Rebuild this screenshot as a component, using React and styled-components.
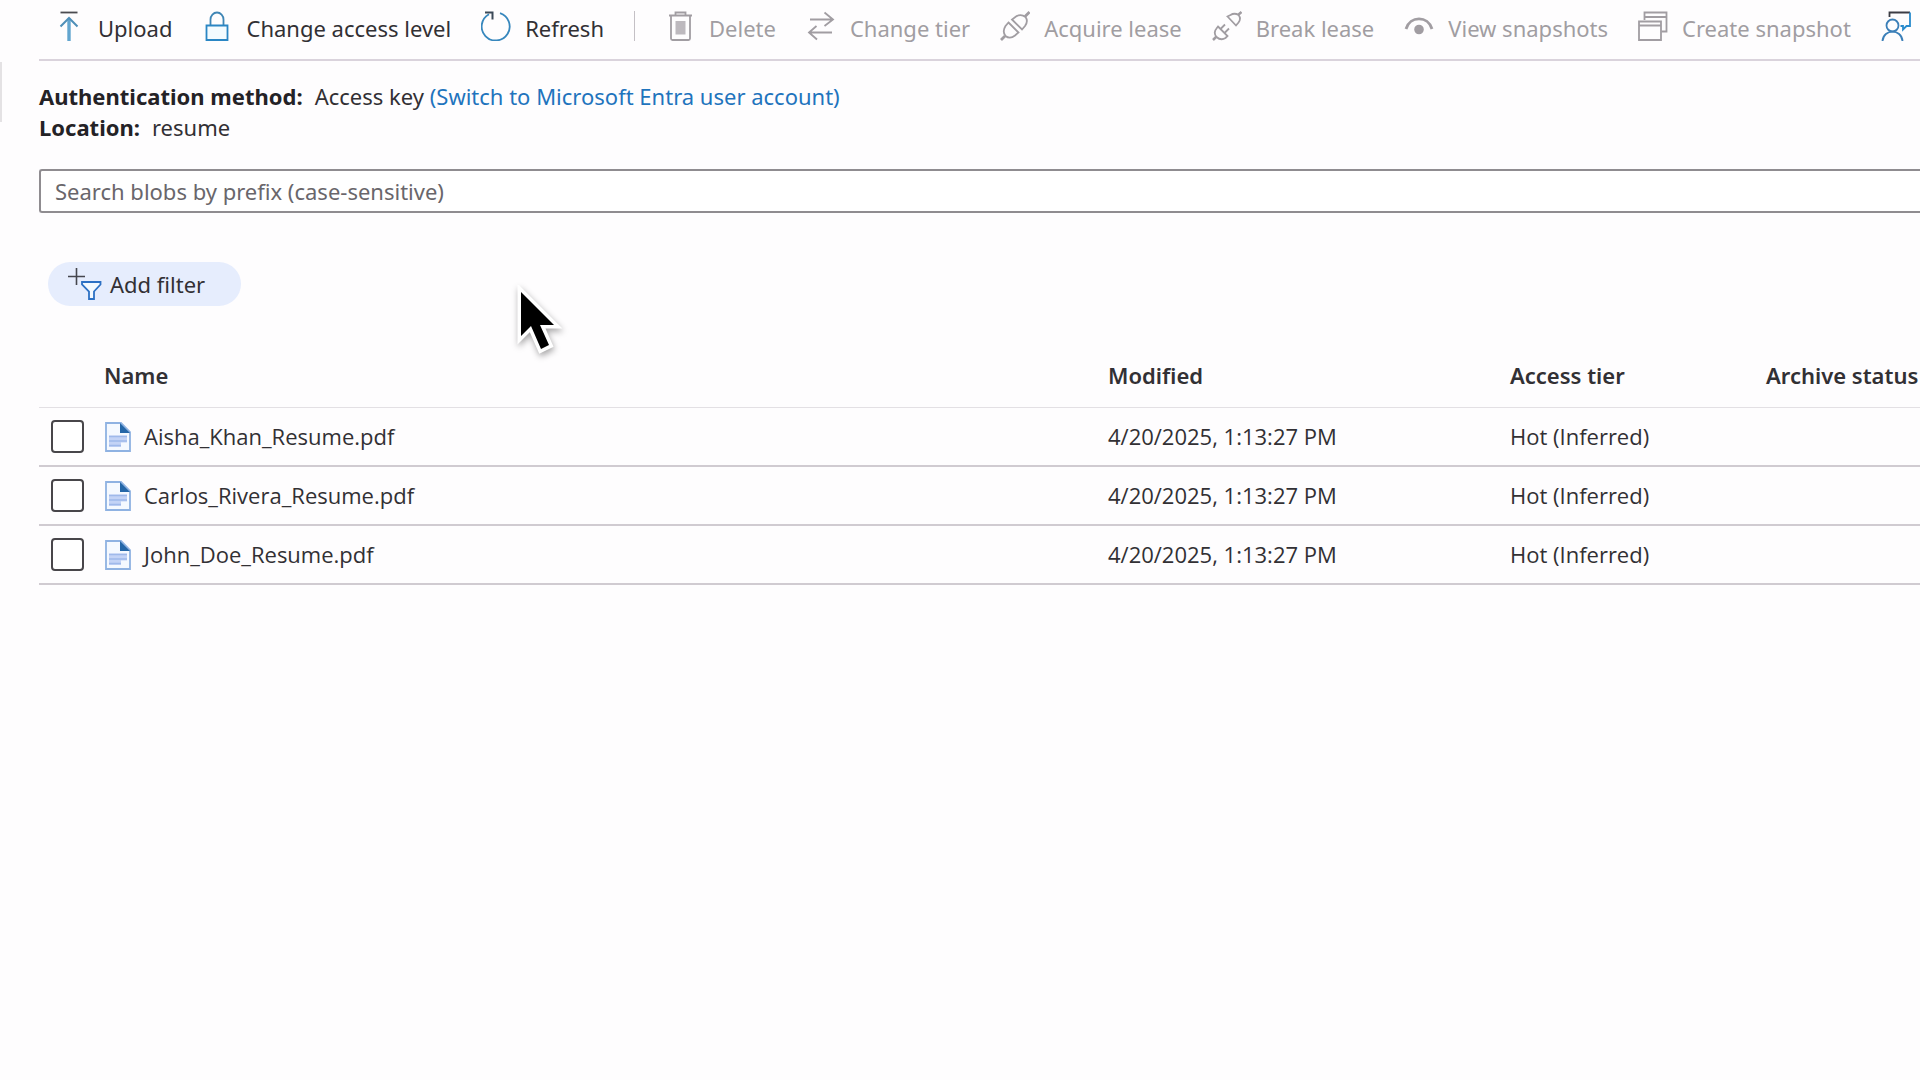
import React, { useState } from "react";
import styled, { createGlobalStyle } from "styled-components";

const GlobalStyle = createGlobalStyle`
  * {
    box-sizing: border-box;
  }
  body {
    margin: 0;
    overflow-x: hidden;
    background-color: #fefdfe;
    color: #323034;
    font-family: "Noto Sans", "Open Sans", sans-serif;
    font-size: 22px;
    line-height: 31px;
  }
  button, input {
    font: inherit;
    color: inherit;
  }
`;

const UploadIcon = () => (
  <Icon viewBox="0 0 30 30">
    <path d="M6.5 1.5h17" stroke="#4b4b50" />
    <path d="M15 7.5V30" stroke="#62a5cf" strokeWidth="3.4" />
    <path d="M6.5 15.5L15 7l8.5 8.5" stroke="#4f8fb8" strokeWidth="2" />
  </Icon>
);

const LockIcon = () => (
  <Icon viewBox="0 0 30 30">
    <path d="M8.5 14V8.5a6.5 7 0 0 1 13 0V14" stroke="#3f86b5" />
    <path d="M4.5 14.5h21v14.5h-21z" stroke="#2a86c4" fill="#f3fbff" />
  </Icon>
);

const RefreshIcon = () => (
  <Icon viewBox="0 0 30 30">
    <path d="M19 2.2A14 14 0 1 1 8 3.2" stroke="#3787bd" />
    <path d="M4 1.5h7.5V8.5" stroke="#3c4a58" strokeWidth="2" />
  </Icon>
);

const DeleteIcon = () => (
  <Icon viewBox="0 0 30 30">
    <path d="M4 4.5h23M10.5 4V1.5h10V4" />
    <path d="M6 5v22.5q0 1.5 1.5 1.5h16q1.5 0 1.5-1.5V5" />
    <path d="M10.5 10h10v13.5h-10z" fill="#bdb9be" stroke="none" />
  </Icon>
);

const TierIcon = () => (
  <Icon viewBox="0 0 30 30">
    <path d="M4 8.5h23M18.5 1.5l8.5 7-8.5 6.5" />
    <path d="M26 21.5H3M10.5 15L3 21.5l8 7" />
  </Icon>
);

const AcquireIcon = () => (
  <Icon viewBox="0 0 30 30">
    <path d="M1 29l4-4M25 5.5L29.5 1" strokeWidth="2.8" />
    <path d="M8.5 11.5L18.5 21.5 15 24.5q-5 4-9.5.5-3.500-4.500 0-10z" />
    <path d="M12 8.5L22 18.5l3-3.5q3.500-5 .5-9-4.500-3.500-9.500-.5z" />
  </Icon>
);

const BreakIcon = () => (
  <Icon viewBox="0 0 30 30">
    <path d="M1 29l3.5-3.5M26 4L29.5 1" strokeWidth="2.5" />
    <path d="M6 15.5l9.5 9.5-2 2q-4.5 3-9-1-3.500-4.500 0-8.500z" />
    <path d="M8.5 18l4.5-4.5M12.5 22l4.5-4.5" />
    <path d="M15.5 5.5l8.5 9 2.5-3q3-4 0-7.500-4-2.500-8 0z" />
  </Icon>
);

const EyeIcon = () => (
  <Icon viewBox="0 0 30 30">
    <path d="M2 18C6 4.5 24 4.5 28 18" strokeWidth="2.8" />
    <circle cx="15" cy="18.5" r="4.8" fill="currentColor" stroke="none" />
  </Icon>
);

const SnapshotIcon = () => (
  <Icon viewBox="0 0 30 30">
    <path d="M6.5 9V1.5h22v19h-5M6.5 6h22" />
    <path d="M1 10.5h22V29H1zM1 14.5h22" />
  </Icon>
);

const FeedbackIcon = () => (
  <Icon viewBox="0 0 30 30">
    <path d="M8.5 6V1.5h20.5" stroke="#3c3c44" />
    <path d="M29 1.5v13.500h-3.500L22 18.500V15h-2.500" stroke="#2a8bcd" />
    <circle cx="11.5" cy="14.5" r="6" stroke="#3b7fb8" />
    <path d="M1.500 30c1-12.500 19-12.500 20 0" stroke="#3b7fb8" />
  </Icon>
);

const FilterIcon = () => (
  <Icon viewBox="0 0 34 34" $width={34} $height={34}>
    <path d="M8.5 1v17M0 9.5h17" stroke="#45464e" strokeWidth="1.6" />
    <path
      d="M14 15h18.5v2.5L26 24.5V32h-5v-7.5L14 17.5z"
      stroke="#2d71c4"
      fill="#f4faff"
    />
  </Icon>
);

const FileIcon = () => (
  <Icon viewBox="-1 0 28 30" $width={28}>
    <path
      d="M1 1h15l9 9v19H1z"
      stroke="#8fb2e2"
      strokeWidth="1.8"
      fill="#f5f9ff"
    />
    <path d="M15 1l10 10H15z" fill="#2567a8" stroke="none" />
    <path d="M4 13.5h18v7H4zM4 20h12v5H4z" fill="#c3d3f6" stroke="none" />
    <path d="M4 14.5h18M4 19h18M4 23.5h12" stroke="#9fb9ea" strokeWidth="1.6" />
  </Icon>
);

const actions = [
  { label: "Upload", icon: UploadIcon },
  { label: "Change access level", icon: LockIcon },
  { label: "Refresh", icon: RefreshIcon },
];

const blobActions = [
  { label: "Delete", icon: DeleteIcon },
  { label: "Change tier", icon: TierIcon },
  { label: "Acquire lease", icon: AcquireIcon },
  { label: "Break lease", icon: BreakIcon },
  { label: "View snapshots", icon: EyeIcon },
  { label: "Create snapshot", icon: SnapshotIcon },
];

const blobs = [
  "Aisha_Khan_Resume.pdf",
  "Carlos_Rivera_Resume.pdf",
  "John_Doe_Resume.pdf",
].map((name) => ({
  name,
  modified: "4/20/2025, 1:13:27 PM",
  tier: "Hot (Inferred)",
}));

const App = () => {
  const [prefix, setPrefix] = useState("");

  const rows = blobs
    .filter((blob) => blob.name.startsWith(prefix))
    .map((blob) => (
      <tr key={blob.name}>
        <CheckCell>
          <Checkbox type="checkbox" aria-label={`Select ${blob.name}`} />
        </CheckCell>
        <Cell>
          <FileName>
            <FileIcon />
            {blob.name}
          </FileName>
        </Cell>
        <Cell>{blob.modified}</Cell>
        <Cell>{blob.tier}</Cell>
        <Cell />
      </tr>
    ));

  return (
    <>
      <GlobalStyle />
      <Layout>
        <Rail>
          <RailHandle />
        </Rail>
        <Content>
          <Toolbar role="toolbar" aria-label="Container commands">
            {actions.map(({ label, icon: Glyph }) => (
              <Command type="button" key={label}>
                <Glyph />
                {label}
              </Command>
            ))}
            <Separator />
            {blobActions.map(({ label, icon: Glyph }) => (
              <Command type="button" key={label} disabled>
                <Glyph />
                {label}
              </Command>
            ))}
            <Command type="button" aria-label="Give feedback">
              <FeedbackIcon />
            </Command>
          </Toolbar>
          <Details>
            <Detail>
              <dt>Authentication method:</dt>
              <dd>
                Access key{" "}
                <SwitchLink href="#entra">
                  (Switch to Microsoft Entra user account)
                </SwitchLink>
              </dd>
            </Detail>
            <Detail>
              <dt>Location:</dt>
              <dd>resume</dd>
            </Detail>
          </Details>
          <Search
            type="text"
            aria-label="Search blobs by prefix"
            placeholder="Search blobs by prefix (case-sensitive)"
            value={prefix}
            onChange={(e) => setPrefix(e.target.value)}
          />
          <FilterButton type="button">
            <FilterIcon />
            Add filter
          </FilterButton>
          <Table>
            <thead>
              <tr>
                <HeadCell $width="65px" aria-label="Selection" />
                <HeadCell>Name</HeadCell>
                <HeadCell $width="402px">Modified</HeadCell>
                <HeadCell $width="256px">Access tier</HeadCell>
                <HeadCell $width="154px">Archive status</HeadCell>
              </tr>
            </thead>
            <tbody>{rows}</tbody>
          </Table>
        </Content>
      </Layout>
      <Pointer viewBox="0 0 52 76" aria-hidden="true">
        <path
          d="M7 7v44l10-10 10 23 8-4-9-20h14z"
          fill="#000"
          stroke="#fff"
          strokeWidth="7"
          paintOrder="stroke"
        />
      </Pointer>
    </>
  );
};

export default App;

const Icon = styled.svg.attrs({ "aria-hidden": true })`
  flex: none;
  width: ${(props) => props.$width || 30}px;
  height: ${(props) => props.$height || 30}px;
  fill: none;
  stroke: currentColor;
  stroke-width: 1.8;
`;

const Layout = styled.div`
  display: flex;
`;

const Rail = styled.div`
  flex: none;
  width: 39px;
  padding-top: 62px;
`;

const RailHandle = styled.div`
  width: 2px;
  height: 60px;
  background-color: #e4e2e4;
`;

const Content = styled.main`
  flex: 1;
  min-width: 0;
`;

const Toolbar = styled.div`
  display: flex;
  align-items: flex-start;
  gap: 30px;
  height: 61px;
  padding: 11px 0 0 15px;
  border-bottom: 2px solid #dad3dc;
  overflow: hidden;
`;

const Command = styled.button`
  display: flex;
  flex: none;
  align-items: flex-start;
  gap: 14px;
  padding: 0;
  border: none;
  background: none;
  line-height: 35px;
  white-space: nowrap;
  cursor: pointer;
  &:disabled {
    color: #a19da2;
    cursor: default;
  }
`;

const Separator = styled.div`
  flex: none;
  width: 1px;
  height: 30px;
  background-color: #c4c0c5;
`;

const Details = styled.dl`
  margin: 20px 0 26px;
`;

const Detail = styled.div`
  display: flex;
  gap: 12px;
  dt {
    font-weight: 700;
    color: #242226;
  }
  dd {
    margin: 0;
  }
`;

const SwitchLink = styled.a`
  color: #1f74bd;
  text-decoration: none;
`;

const Search = styled.input`
  display: block;
  width: 100%;
  height: 44px;
  padding: 0 14px;
  border: 2px solid #8f8c90;
  border-right: none;
  border-radius: 3px 0 0 3px;
  background-color: #fff;
  outline: none;
  &::placeholder {
    color: #69666b;
    opacity: 1;
  }
`;

const FilterButton = styled.button`
  display: flex;
  align-items: center;
  gap: 8px;
  height: 44px;
  margin: 49px 0 0 9px;
  padding: 0 36px 0 20px;
  border: none;
  border-radius: 22px;
  background-color: #e6edfd;
  cursor: pointer;
`;

const Table = styled.table`
  width: 100%;
  margin-top: 38px;
  border-collapse: separate;
  border-spacing: 0;
  table-layout: fixed;
  tbody {
    font-family: "Open Sans", "Noto Sans", sans-serif;
  }
`;

const HeadCell = styled.th`
  width: ${(props) => props.$width || "auto"};
  height: 64px;
  padding: 0;
  border-bottom: 1px solid #e3e0e4;
  font-weight: 600;
  text-align: left;
  white-space: nowrap;
`;

const Cell = styled.td`
  height: 59px;
  padding: 0;
  border-bottom: 2px solid #d0cbd1;
  white-space: nowrap;
`;

const CheckCell = styled(Cell)`
  padding-left: 12px;
`;

const Checkbox = styled.input`
  display: block;
  appearance: none;
  width: 33px;
  height: 33px;
  margin: 0;
  border: 2px solid #48464a;
  border-radius: 4px;
  background-color: #fff;
  &:checked {
    background-color: #1f74bd;
  }
`;

const FileName = styled.span`
  display: flex;
  align-items: center;
  gap: 12px;
`;

/* drawn pointer, floats over the page */
const Pointer = styled.svg`
  position: fixed;
  top: 285px;
  left: 514px;
  width: 52px;
  height: 76px;
  pointer-events: none;
  filter: drop-shadow(1px 3px 3px rgba(0, 0, 0, 0.35));
`;
